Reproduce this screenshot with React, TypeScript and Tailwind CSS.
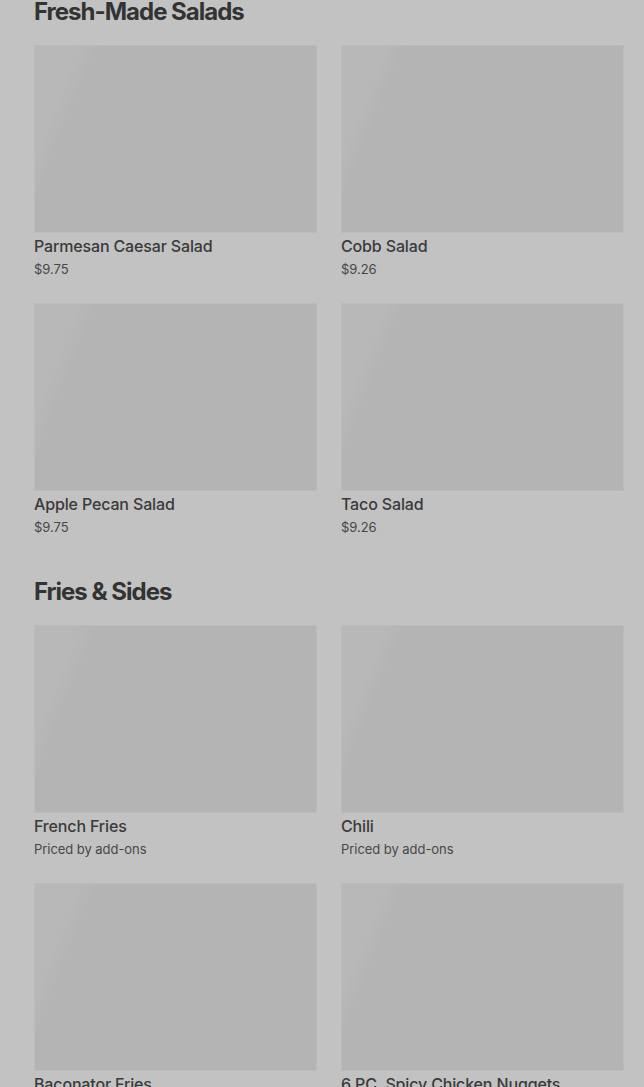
type Item = { name: string; price: string };

const sections: { title: string; items: Item[] }[] = [
  {
    title: 'Fresh-Made Salads',
    items: [
      { name: 'Parmesan Caesar Salad', price: '$9.75' },
      { name: 'Cobb Salad', price: '$9.26' },
      { name: 'Apple Pecan Salad', price: '$9.75' },
      { name: 'Taco Salad', price: '$9.26' },
    ],
  },
  {
    title: 'Fries & Sides',
    items: [
      { name: 'French Fries', price: 'Priced by add-ons' },
      { name: 'Chili', price: 'Priced by add-ons' },
      { name: 'Baconator Fries', price: 'Priced by add-ons' },
      { name: '6 PC. Spicy Chicken Nuggets', price: '$3.49' },
    ],
  },
];

function MenuCard({ item }: { item: Item }) {
  return (
    <div className="flex flex-col">
      <div className="h-[188px] w-full border border-[#bbbbbb] bg-[linear-gradient(112deg,#b8b8b8_0%,#b8b8b8_12%,#b4b4b4_18%,#b4b4b4_100%)]" />
      <div className="mt-[1px] text-[16px] leading-[24px] font-medium tracking-[-0.15px] text-[#3a3a3a]">{item.name}</div>
      <div className="mt-[1px] text-[13px] leading-[20px] tracking-[-0.05px] text-[#474747]">{item.price}</div>
    </div>
  );
}

function App() {
  return (
    <div className="min-h-screen bg-[#c2c2c2] pl-[34px] pr-[20px] font-['Inter',sans-serif] overflow-hidden">
      {sections.map((s, i) => (
        <section key={s.title} className={i > 0 ? 'mt-[43px]' : ''}>
          <h2 className="text-[24px] leading-[24px] font-bold tracking-[-1px] text-[#333333] mb-[21px]">
            {s.title}
          </h2>
          <div className="grid grid-cols-2 gap-x-6 gap-y-[24px]">
            {s.items.map((it) => (
              <MenuCard key={it.name} item={it} />
            ))}
          </div>
        </section>
      ))}
    </div>
  );
}

export default App;
